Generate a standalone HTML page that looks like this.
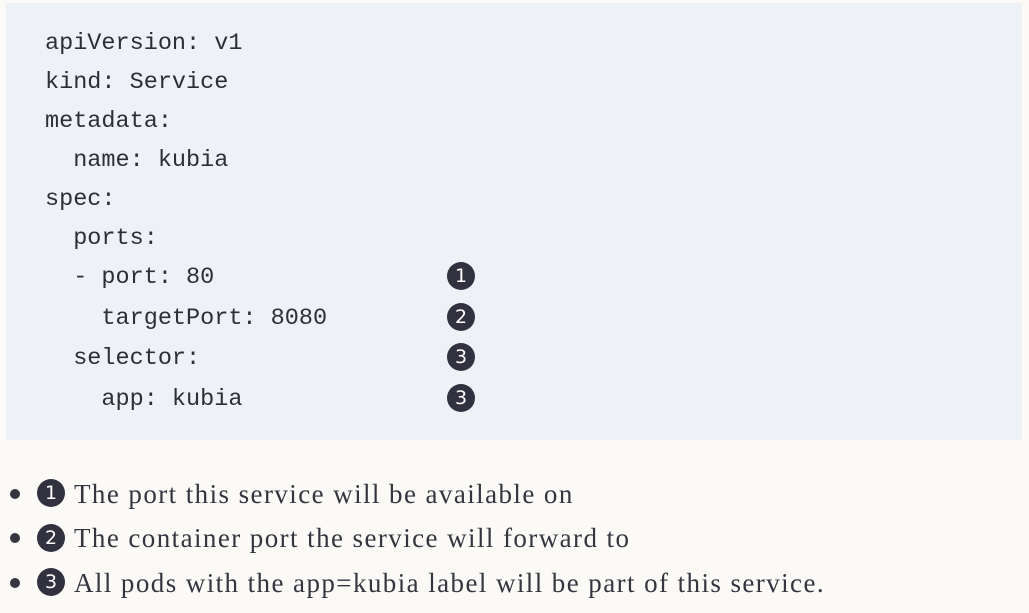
<!DOCTYPE html>
<html><head><style>
body{margin:0;background:#fbfaf7;width:1029px;height:613px;overflow:hidden;position:relative}
.code{position:absolute;left:6px;top:3px;width:1016px;height:437px;background:#eef1f6}
.l{position:absolute;left:45px;font-family:"Liberation Mono",monospace;font-size:23.5px;color:#2e2e36;white-space:pre;line-height:28px}
.c{position:absolute;width:28px;height:28px;border-radius:50%;background:#31313f;color:#fff;font-family:"DejaVu Sans",sans-serif;font-size:19px;line-height:28px;text-align:center}
.b{position:absolute;left:0;font-family:"Liberation Serif",serif;font-size:27px;letter-spacing:1.42px;color:#353540;line-height:30px;white-space:nowrap}
.dot{position:absolute;left:10px;width:10px;height:10px;border-radius:50%;background:#353540}
</style></head><body>
<div class="code"></div>
<div class="l" style="top:30px">apiVersion: v1</div>
<div class="l" style="top:69px">kind: Service</div>
<div class="l" style="top:108px">metadata:</div>
<div class="l" style="top:147px">  name: kubia</div>
<div class="l" style="top:186px">spec:</div>
<div class="l" style="top:225px">  ports:</div>
<div class="l" style="top:264px">  - port: 80</div>
<div class="l" style="top:305px">    targetPort: 8080</div>
<div class="l" style="top:345px">  selector:</div>
<div class="l" style="top:386px">    app: kubia</div>
<div class="c" style="left:447px;top:262px">1</div>
<div class="c" style="left:447px;top:303px">2</div>
<div class="c" style="left:447px;top:343px">3</div>
<div class="c" style="left:447px;top:384px">3</div>

<div class="dot" style="top:489px"></div>
<div class="c" style="left:37px;top:479px">1</div>
<div class="b" style="left:74px;top:479px">The port this service will be available on</div>
<div class="dot" style="top:533px"></div>
<div class="c" style="left:37px;top:524px">2</div>
<div class="b" style="left:74px;top:523px">The container port the service will forward to</div>
<div class="dot" style="top:578px"></div>
<div class="c" style="left:37px;top:568px">3</div>
<div class="b" style="left:74px;top:568px">All pods with the app=kubia label will be part of this service.</div>
</body></html>
